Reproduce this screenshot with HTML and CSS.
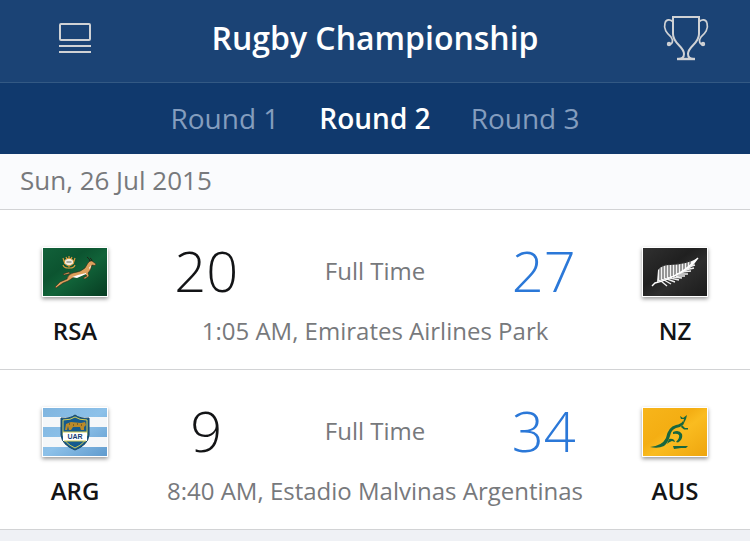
FILE: index.html
```html
<!DOCTYPE html>
<html lang="en">
<head>
    <meta charset="UTF-8">
    <meta name="viewport" content="width=device-width, initial-scale=1.0">
    <title>Rugby Championship</title>
    <link rel="stylesheet" href="styles.css">
</head>
<body>
    <header class="header">
        <button class="header__button" aria-label="News">
            <svg width="32" height="30" viewBox="0 0 32 30" fill="none" stroke="#d0d2d5" stroke-width="2">
                <rect x="1" y="1" width="30" height="16" rx="1"/>
                <path d="M0 23H32M0 29H32"/>
            </svg>
        </button>
        <h1 class="header__title">Rugby Championship</h1>
        <button class="header__button header__button--trophy" aria-label="Standings">
            <svg width="48" height="48" viewBox="0 0 48 48" fill="none" stroke="#d0d2d5" stroke-width="2">
                <path d="M22 40C22 32 11 30 11 20V3H37V20C37 30 26 32 26 40C26 43 28 45 32 45H16C20 45 22 43 22 40Z"/>
                <path d="M11 8C9 5 4 5 3 9C1 16 6 20 9 23C12 27 10 31 7 30M37 8C39 5 44 5 45 9C47 16 42 20 39 23C36 27 38 31 41 30" stroke-width="1.7"/>
                <path d="M15 45H33" stroke-width="2.4"/>
                <circle cx="7" cy="30" r="1.2"/>
                <circle cx="41" cy="30" r="1.2"/>
            </svg>
        </button>
    </header>

    <nav class="rounds">
        <button class="rounds__item">Round 1</button>
        <button class="rounds__item rounds__item--active" aria-current="true">Round 2</button>
        <button class="rounds__item">Round 3</button>
    </nav>

    <main class="fixtures">
        <h2 class="fixtures__date">Sun, 26 Jul 2015</h2>

        <article class="match">
            <svg class="match__flag" viewBox="0 0 64 48" role="img" aria-label="South Africa">
                <defs>
                    <linearGradient id="green" x1="0" y1="0" x2="1" y2="1">
                        <stop offset="0" stop-color="#12613a"/>
                        <stop offset=".35" stop-color="#0c5430"/>
                        <stop offset=".55" stop-color="#116339"/>
                        <stop offset="1" stop-color="#073c22"/>
                    </linearGradient>
                </defs>
                <rect width="64" height="48" fill="url(#green)"/>
                <!-- protea -->
                <g stroke="#d99b3c" stroke-width="1.2" fill="none">
                    <path d="M20 10L22 16M32 10L30 16M23 9L24 11M29 9L28 11M26 8V10"/>
                    <path d="M20 17Q21 20 25 20M32 17Q31 20 27 20M26 18V21"/>
                </g>
                <ellipse cx="26" cy="14" rx="4.6" ry="3.6" fill="#f2ede0" stroke="#d99b3c"/>
                <path d="M23.500 14H28.500" stroke="#5c6960"/>
                <!-- springbok -->
                <g stroke="#2d1c10" stroke-width=".5">
                    <path d="M12 39L17 34L24 31Q25 26 30 25Q38 24 42 20L45 15L47 13L49 13L53 16L52 17.500L49 17Q48 22 45 25L46 28L42 31L40 30L44 28L42 26Q36 30 31 29L25 33L20 35L13 40Z" fill="#dda05c"/>
                    <path d="M27 25.500L21 27L20 26L26 24Z" fill="#dda05c"/>
                </g>
                <path d="M43 25Q39 26 35 27L29 29L34 30L43 26ZM46 20L48 17L47 21Z" fill="#fff"/>
                <path d="M47 13.500Q47 11 44 9M49 13Q49 11 47 10" fill="none" stroke="#21190f" stroke-width=".8"/>
            </svg>
            <div class="match__scores">
                <span class="match__score">20</span>
                <span class="match__status">Full Time</span>
                <span class="match__score match__score--winner">27</span>
            </div>
            <svg class="match__flag" viewBox="0 0 64 48" role="img" aria-label="New Zealand">
                <defs>
                    <linearGradient id="black" x1="0" y1="0" x2="1" y2="1">
                        <stop offset="0" stop-color="#303030"/>
                        <stop offset=".4" stop-color="#202020"/>
                        <stop offset=".6" stop-color="#2d2d2d"/>
                        <stop offset="1" stop-color="#1b1b1b"/>
                    </linearGradient>
                </defs>
                <rect width="64" height="48" fill="url(#black)"/>
                <!-- silver fern -->
                <path d="M14 34L15 22Q19 17 27 17Q43 17 55 10Q49 23 29 29Z" fill="#f4f4f4"/>
                <path d="M17 32V20M20 31V17M23 30V16M26 29V16M29 28V16M32 27V16M35 25V15M38 24V15M41 22V14M44 20V13M47 18V12" stroke="#3b3b3b"/>
                <g stroke="#eee" stroke-width="1.4">
                    <path d="M18 33L24 38M21 32L28 36M24 31L32 34M27 30L36 32M30 29L39 30M33 28L42 28M36 26L45 26M39 24L48 23M42 22L51 20M45 19L52 17"/>
                    <path d="M9 38L12 35Q37 29 55 10" fill="none" stroke="#fff"/>
                </g>
            </svg>
            <h3 class="match__team">RSA</h3>
            <p class="match__venue">1:05 AM, Emirates Airlines Park</p>
            <h3 class="match__team">NZ</h3>
        </article>

        <article class="match">
            <svg class="match__flag" viewBox="0 0 64 48" role="img" aria-label="Argentina">
                <defs>
                    <linearGradient id="sky" x1="0" y1="0" x2="1" y2="1">
                        <stop offset="0" stop-color="#80b5df"/>
                        <stop offset=".5" stop-color="#8dc1e9"/>
                        <stop offset="1" stop-color="#609bce"/>
                    </linearGradient>
                </defs>
                <rect width="64" height="48" fill="url(#sky)"/>
                <path d="M0 9H64V19H0ZM0 29H64V39H0Z" fill="#f5f7f9"/>
                <!-- union crest -->
                <path d="M18 10Q27 11 32 7Q37 11 46 10V27Q45 37 32 42Q19 37 18 27Z" fill="#155b8e" stroke="#174460"/>
                <path d="M20 12Q28 12 32 9Q36 12 44 12V27Q43 35 32 40Q21 35 20 27Z" fill="none" stroke="#d8cf54"/>
                <path d="M20 24H44V33H20Z" fill="#fff"/>
                <path d="M20 24H44M21 33H43" stroke="#d8cf54"/>
                <path d="M22 22L23 16L28 14L38 15L42 14L43 17L41 19L41 22H38L37 19L30 19L28 22H26L25 18L24 22Z" fill="#b98a2a"/>
                <path d="M26 16H27M30 17H31M34 16H35M38 17H39" stroke="#48391d"/>
                <text class="crest-text" x="32" y="31" text-anchor="middle">UAR</text>
            </svg>
            <div class="match__scores">
                <span class="match__score">9</span>
                <span class="match__status">Full Time</span>
                <span class="match__score match__score--winner">34</span>
            </div>
            <svg class="match__flag" viewBox="0 0 64 48" role="img" aria-label="Australia">
                <defs>
                    <linearGradient id="gold" x1="0" y1="0" x2="1" y2="1">
                        <stop offset="0" stop-color="#f7b51b"/>
                        <stop offset=".4" stop-color="#f4ae13"/>
                        <stop offset=".55" stop-color="#fabc20"/>
                        <stop offset="1" stop-color="#eea50e"/>
                    </linearGradient>
                </defs>
                <rect width="64" height="48" fill="url(#gold)"/>
                <!-- wallaby -->
                <g fill="#17663f">
                    <path d="M7 39Q19 38 23 30Q25 19 33 17Q38 16 40 13L41 16Q38 19 33 20Q28 22 27 28Q25 35 21 38Q15 41 7 39Z"/>
                    <path d="M37 8L40 10L44 7L43 11L41 15L40 15L41 11L38 11Z"/>
                    <path d="M39 17L42 20L45 20L45 21.500L41 21.500L38 19Z"/>
                    <path d="M30 24Q36 21 39 26Q40 30 37 33L35 34.500L33 34Q37 30 36 27Q34 25 30 26Z"/>
                    <path d="M26 31Q31 30 32 34L29 33Q26 34 24 36Z"/>
                    <path d="M30 38H45L43 40H38L31 41Z"/>
                </g>
            </svg>
            <h3 class="match__team">ARG</h3>
            <p class="match__venue">8:40 AM, Estadio Malvinas Argentinas</p>
            <h3 class="match__team">AUS</h3>
        </article>
    </main>
</body>
</html>
```
FILE: styles.css
```css
:root {
    --header: #1b4375;
    --rounds: #10396d;
    --line: #d2d3d5;
    --text: #131416;
    --muted: #77797c;
    --winner: #2b78d8;
}

* {
    margin: 0;
    padding: 0;
    box-sizing: border-box;
}

body {
    background: #eff1f5;
    color: var(--text);
    font-family: "Open Sans", "Noto Sans", sans-serif;
    font-size: 24px;
}

button {
    border: 0;
    background: none;
    font-family: inherit;
    cursor: pointer;
}

.header {
    display: grid;
    grid-template-columns: 20% 1fr 20%;
    align-items: center;
    justify-items: center;
    height: 83px;
    padding-bottom: 6px;
    border-bottom: 1px solid #335984;
    background: var(--header);
}

.header__button svg {
    display: block;
}

.header__button--trophy {
    justify-self: end;
    margin-right: 40px;
}

.header__title {
    color: #fff;
    font-size: 32px;
    font-weight: 600;
    line-height: 48px;
    white-space: nowrap;
}

.rounds {
    display: flex;
    align-items: center;
    justify-content: center;
    gap: 40px;
    height: 71px;
    padding-bottom: 2px;
    background: var(--rounds);
}

.rounds__item {
    color: #849dbe;
    font-size: 28px;
    font-weight: 400;
    line-height: 40px;
}

.rounds__item--active {
    color: #fff;
    font-weight: 600;
}

.fixtures__date {
    padding: 6px 20px 9px;
    border-bottom: 1px solid var(--line);
    background: #fafbfd;
    color: var(--muted);
    font-size: 26px;
    font-weight: 400;
    line-height: 40px;
}

.match {
    display: grid;
    grid-template-columns: 20% 1fr 20%;
    grid-template-rows: 80px 36px;
    align-items: center;
    justify-items: center;
    padding: 22px 0 21px;
    border-bottom: 1px solid var(--line);
    background: #fff;
}

.match__flag {
    width: 66px;
    height: 50px;
    border: 1px solid #fff;
    box-shadow: 0 2px 4px rgba(0, 0, 0, 0.4);
}

.match__scores {
    display: grid;
    grid-template-columns: 1fr 2fr 1fr;
    align-items: center;
    justify-items: center;
    width: 100%;
    padding-bottom: 4px;
}

.match__score {
    font-size: 56px;
    font-weight: 300;
    line-height: 72px;
}

.match__score--winner {
    color: var(--winner);
}

.match__status,
.match__venue {
    color: var(--muted);
    white-space: nowrap;
}

.match__team {
    font-size: 24px;
    font-weight: 600;
}

.crest-text {
    fill: #173f78;
    font-family: "Liberation Sans", Arial, sans-serif;
    font-size: 7px;
    font-weight: bold;
}
```
